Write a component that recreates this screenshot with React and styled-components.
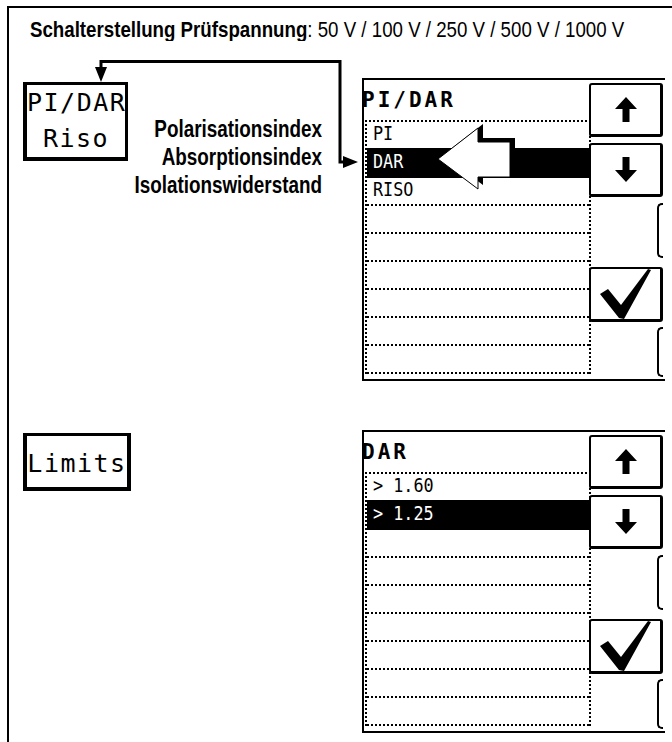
import React from 'react';
import styled, { createGlobalStyle } from 'styled-components';

const GlobalStyle = createGlobalStyle`
  html, body {
    margin: 0;
    padding: 0;
    background: #fff;
    overflow: hidden;
  }
  body {
    color: #000;
    font-family: "Liberation Sans", Arial, sans-serif;
  }
`;

const Frame = styled.div`
  margin: 6px 0 0 7px;
  height: 736px;
  box-sizing: border-box;
  border-top: 2px solid #000;
  border-left: 2px solid #000;
  overflow: hidden;
`;

// narrow Helvetica look: Liberation Sans squeezed horizontally
const Heading = styled.div`
  box-sizing: border-box;
  height: 33px;
  padding: 8px 0 0 21px;
  font-size: 22.8px;
  line-height: 26px;
  white-space: nowrap;
  overflow: hidden;
  span {
    display: inline-block;
    transform: scaleX(0.82);
    transform-origin: left center;
  }
  b { font-weight: 700; }
`;

const Section = styled.section`
  position: relative;
  display: flex;
  padding-left: 14px;
  margin-top: ${p => p.$gap || 0}px;
`;

const LeftCol = styled.div`
  width: 339px;
  flex: none;
  display: flex;
  align-items: flex-start;
`;

const Key = styled.div`
  box-sizing: border-box;
  flex: none;
  width: ${p => p.$w}px;
  height: ${p => p.$h}px;
  margin-top: ${p => p.$top}px;
  padding-top: ${p => p.$pad || 0}px;
  border-style: solid;
  border-color: #000;
  border-width: 3px ${p => p.$right || 3}px 4px 4px;
  font-family: "DejaVu Sans Mono", "Liberation Mono", monospace;
  font-size: 25px;
  line-height: ${p => p.$lh}px;
  letter-spacing: 1.5px;
  text-align: center;
  white-space: nowrap;
`;

const Labels = styled.div`
  flex: 1;
  min-width: 0;
  margin: 74px 40px 0 0;
  display: flex;
  flex-direction: column;
  align-items: flex-end;
  font-weight: 700;
  font-size: 23px;
  line-height: 28px;
  white-space: nowrap;
  transform: scaleX(0.82);
  transform-origin: right center;
`;

const Connector = styled.svg`
  position: absolute;
  left: 0;
  top: 0;
  overflow: visible;
  pointer-events: none;
`;

const Screen = styled.div`
  position: relative;
  flex: none;
  box-sizing: border-box;
  width: 303px;
  height: 303px;
  margin-top: 37px;
  display: flex;
  border-top: 2px solid #000;
  border-left: 2px solid #000;
  border-bottom: 2px solid #000;
`;

const Pane = styled.div`
  width: 224px;
  display: flex;
  flex-direction: column;
`;

const ScreenTitle = styled.div`
  height: 40px;
  margin-left: -2px;
  font-family: "DejaVu Sans Mono", "Liberation Mono", monospace;
  font-weight: 700;
  font-size: 21px;
  line-height: 40px;
  letter-spacing: 3px;
`;

const List = styled.div`
  margin-left: 1px;
  width: 222px;
  border: 2px dotted #000;
  border-bottom: none;
`;

const Row = styled.div`
  box-sizing: border-box;
  height: 28px;
  padding-left: 6px;
  border-bottom: 2px ${p => (p.$on ? 'solid' : 'dotted')} #000;
  background: ${p => (p.$on ? '#000' : 'transparent')};
  box-shadow: ${p => (p.$on ? '0 -2px 0 #000' : 'none')};
  color: ${p => (p.$on ? '#fff' : '#000')};
  font-family: "DejaVu Sans Mono", "Liberation Mono", monospace;
  font-size: 20px;
  line-height: 22px;
  white-space: pre;
`;

const RowText = styled.span`
  display: inline-block;
  transform: scaleX(0.84);
  transform-origin: left center;
`;

const ButtonCol = styled.div`
  flex: 1;
  display: flex;
  flex-direction: column;
  align-items: flex-end;
  padding-right: 2px;
`;

const SoftButton = styled.div`
  box-sizing: border-box;
  width: 74px;
  height: ${p => p.$h}px;
  margin-top: ${p => p.$top}px;
  display: flex;
  align-items: center;
  justify-content: center;
  border: 2px solid #000;
  border-right-width: 3px;
  border-bottom-width: 3px;
  border-radius: 3px;
`;

const Stub = styled.div`
  box-sizing: border-box;
  width: 6px;
  height: ${p => p.$h}px;
  margin-top: ${p => p.$top}px;
  border: 2px solid #000;
  border-right: none;
  border-radius: 5px 0 0 5px;
`;

const Overlay = styled.svg`
  position: absolute;
  left: 0;
  top: 0;
  overflow: visible;
  pointer-events: none;
`;

const UpIcon = ({ down }) => (
  <svg width="22" height="25" viewBox="0 0 22 25" style={down ? { transform: 'rotate(180deg)' } : undefined}>
    <polygon points="11,0 22,12 14.5,12 14.5,25 7.5,25 7.5,12 0,12" fill="#000" />
  </svg>
);

const CheckIcon = () => (
  <svg width="60" height="52" viewBox="0 0 60 52">
    <polygon points="4,26 12,21 25,37 52,1 55,2 28,51 23,50" fill="#000" />
  </svg>
);

const Display = ({ title, items, active, pointer }) => (
  <Screen>
    <Pane>
      <ScreenTitle>{title}</ScreenTitle>
      <List>
        {Array.from({ length: 9 }).map((_, i) => (
          <Row key={i} $on={i === active}>
            <RowText>{items[i] || ''}</RowText>
          </Row>
        ))}
      </List>
    </Pane>
    <ButtonCol>
      <SoftButton $top={3} $h={54}><UpIcon /></SoftButton>
      <SoftButton $top={6} $h={54}><UpIcon down /></SoftButton>
      <Stub $top={6} $h={55} />
      <SoftButton $top={9} $h={55}><CheckIcon /></SoftButton>
      <Stub $top={5} $h={50} />
    </ButtonCol>
    {pointer && (
      <Overlay width="160" height="120">
        <polygon points="79,75 119,44 119,58 151,58 151,93 119,93 119,105" fill="#000" />
        <polygon points="74,79 114,48 114,62 146,62 146,97 114,97 114,109" fill="#fff" stroke="#000" strokeWidth="1" />
      </Overlay>
    )}
  </Screen>
);

export default function App() {
  return (
    <>
      <GlobalStyle />
      <Frame>
        <Heading>
          <span><b>Schalterstellung Prüfspannung</b>: 50 V / 100 V / 250 V / 500 V / 1000 V</span>
        </Heading>

        <Section>
          <LeftCol>
            <Key $w={105} $h={79} $top={41} $lh={36}>
              PI/DAR<br />Riso
            </Key>
            <Labels>
              <span>Polarisationsindex</span>
              <span>Absorptionsindex</span>
              <span>Isolationswiderstand</span>
            </Labels>
          </LeftCol>
          <Display title="PI/DAR" items={['PI', 'DAR', 'RISO']} active={1} pointer />
          <Connector width="360" height="140">
            <polyline points="92,28 92,20.5 331,20.5 331,121 336,121" fill="none" stroke="#000" strokeWidth="3" />
            <polygon points="86,26 98,26 92,41" fill="#000" />
            <polygon points="334,115 334,127 349,121" fill="#000" />
          </Connector>
        </Section>

        <Section $gap={12}>
          <LeftCol>
            <Key $w={108} $h={58} $top={40} $lh={46} $pad={5} $right={4}>
              Limits
            </Key>
          </LeftCol>
          <Display title="DAR" items={['> 1.60', '> 1.25']} active={1} />
        </Section>
      </Frame>
    </>
  );
}
